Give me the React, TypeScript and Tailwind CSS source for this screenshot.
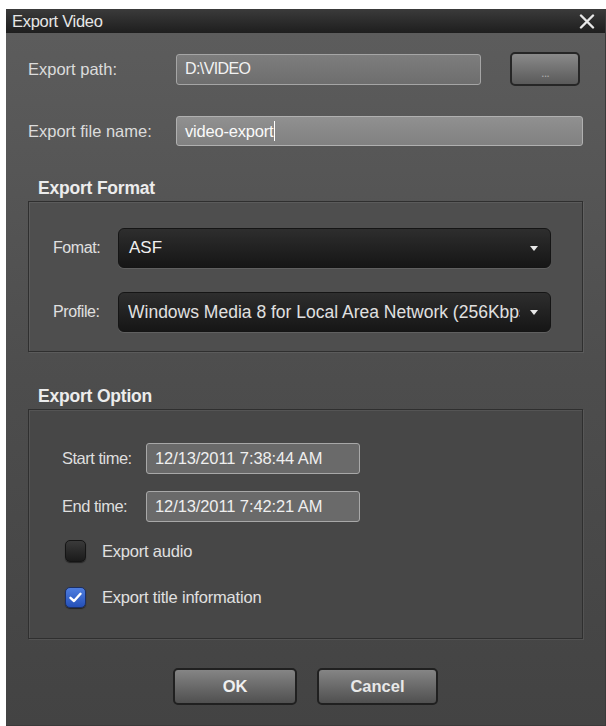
import React from "react";

const font = { fontFamily: '"Liberation Sans", Arial, sans-serif' };

function Caret() {
  return (
    <svg width="8" height="5" viewBox="0 0 8 5" className="shrink-0">
      <path d="M0 0 L8 0 L4 5 Z" fill="#e8e8e8" />
    </svg>
  );
}

function Check({ checked }: { checked: boolean }) {
  if (checked) {
    return (
      <div className="w-[21px] h-[21px] rounded-[5px] border border-[#1b2f66] bg-gradient-to-b from-[#4f7ee0] to-[#2550b8] flex items-center justify-center shadow-[0_1px_1px_rgba(0,0,0,0.5)]">
        <svg width="13" height="11" viewBox="0 0 13 11">
          <path d="M1.5 5.8 L5 9 L11.5 1.8" fill="none" stroke="#ffffff" strokeWidth="2.4" strokeLinecap="round" strokeLinejoin="round" />
        </svg>
      </div>
    );
  }
  return (
    <div className="w-[21px] h-[22px] rounded-[5px] border border-[#151515] bg-gradient-to-b from-[#3a3a3a] to-[#1b1b1b] shadow-[0_1px_1px_rgba(0,0,0,0.5)]" />
  );
}

export default function App() {
  return (
    <div className="w-[606px] h-[726px] bg-white overflow-hidden" style={font}>
      <div className="ml-[6px] mt-[9px] w-[600px] h-[717px] flex flex-col border-r border-b border-[#3a3a3a]">
        {/* title bar */}
        <div className="h-[24px] bg-gradient-to-b from-[#3b3b3b] to-[#1e1e1e] flex items-center justify-between pl-[6px] pr-[10px] shrink-0">
          <span className="text-[16.5px] text-[#e6e6e6] leading-none tracking-[-0.3px]">Export Video</span>
          <svg width="16" height="15" viewBox="0 0 16 15">
            <path d="M2 1.5 L14 13.5 M14 1.5 L2 13.5" stroke="#e8e8e8" strokeWidth="2.4" strokeLinecap="round" />
          </svg>
        </div>
        {/* body */}
        <div className="flex-1 bg-gradient-to-b from-[#5c5c5c] via-[#4d4d4d] to-[#434343] flex flex-col pl-[22px] pt-[19px]">
          {/* row 1 */}
          <div className="flex items-center h-[34px]">
            <span className="w-[148px] text-[16.5px] text-[#dcdcdc] whitespace-nowrap">Export path:</span>
            <div className="w-[305px] h-[31px] rounded-[3px] border border-[#a5a5a5] bg-gradient-to-b from-[#7d7d7d] to-[#6e6e6e] flex items-center pl-[8px] text-[16px] text-[#f2f2f2] tracking-[-0.6px]">
              D:\VIDEO
            </div>
            <div className="ml-[29px] w-[70px] h-[34px] rounded-[5px] border-2 border-[#262626] bg-gradient-to-b from-[#8a8a8a] to-[#5a5a5a] flex items-end justify-center pb-[5px] text-[13px] leading-none text-[#a8a8a8] tracking-[-1px]">
              ...
            </div>
          </div>
          {/* row 2 */}
          <div className="flex items-center h-[30px] mt-[30px]">
            <span className="w-[148px] text-[16.5px] text-[#dcdcdc] whitespace-nowrap">Export file name:</span>
            <div className="w-[407px] h-[30px] rounded-[3px] border border-[#b0b0b0] bg-gradient-to-b from-[#909090] to-[#818181] flex items-center pl-[8px] text-[16.5px] text-[#fafafa] tracking-[-0.2px]">
              video-export<span className="inline-block w-[1px] h-[20px] bg-white ml-[1px]" />
            </div>
          </div>
          {/* Export Format */}
          <div className="mt-[33px] pl-[10px] text-[17.5px] font-bold text-[#ececec] leading-[19px] tracking-[-0.2px]">Export Format</div>
          <div className="mt-[3px] w-[555px] h-[151px] border border-[#2f2f2f] shadow-[inset_1px_1px_0_rgba(255,255,255,0.08),1px_1px_0_rgba(255,255,255,0.08)] bg-[#4e4e4e] flex flex-col pt-[26px] pl-[24px]">
            <div className="flex items-center h-[40px]">
              <span className="w-[65px] text-[16px] text-[#e0e0e0] tracking-[-0.4px]">Fomat:</span>
              <div className="w-[433px] h-[40px] rounded-[6px] border border-[#151515] bg-gradient-to-b from-[#2e2e2e] to-[#161616] flex items-center justify-between pl-[10px] pr-[12px] text-[17px] text-[#f0f0f0] shadow-[0_1px_0_rgba(255,255,255,0.1)]">
                <span>ASF</span>
                <Caret />
              </div>
            </div>
            <div className="flex items-center h-[40px] mt-[24px]">
              <span className="w-[65px] text-[16px] text-[#e0e0e0] tracking-[-0.4px]">Profile:</span>
              <div className="w-[433px] h-[40px] rounded-[6px] border border-[#151515] bg-gradient-to-b from-[#2e2e2e] to-[#161616] flex items-center justify-between pl-[9px] pr-[12px] text-[17.5px] text-[#e0e0e0] shadow-[0_1px_0_rgba(255,255,255,0.1)]">
                <span className="whitespace-nowrap overflow-hidden w-[392px]">Windows Media 8 for Local Area Network (256Kbps)</span>
                <Caret />
              </div>
            </div>
          </div>
          {/* Export Option */}
          <div className="mt-[35px] pl-[10px] text-[17.5px] font-bold text-[#ececec] leading-[19px] tracking-[-0.2px]">Export Option</div>
          <div className="mt-[3px] w-[555px] h-[230px] border border-[#2f2f2f] shadow-[inset_1px_1px_0_rgba(255,255,255,0.07),1px_1px_0_rgba(255,255,255,0.07)] bg-[#474747] flex flex-col pt-[33px] pl-[33px]">
            <div className="flex items-center h-[31px]">
              <span className="w-[84px] text-[16.5px] text-[#dedede] tracking-[-0.5px] whitespace-nowrap">Start time:</span>
              <div className="w-[214px] h-[31px] rounded-[3px] border border-[#a8a8a8] bg-[#6a6a6a] flex items-center pl-[8px] text-[16.5px] text-[#efefef] tracking-[-0.1px] whitespace-nowrap">
                12/13/2011 7:38:44 AM
              </div>
            </div>
            <div className="flex items-center h-[31px] mt-[17px]">
              <span className="w-[84px] text-[16.5px] text-[#dedede] tracking-[-0.5px] whitespace-nowrap">End time:</span>
              <div className="w-[214px] h-[31px] rounded-[3px] border border-[#a8a8a8] bg-[#6a6a6a] flex items-center pl-[8px] text-[16.5px] text-[#efefef] tracking-[-0.1px] whitespace-nowrap">
                12/13/2011 7:42:21 AM
              </div>
            </div>
            <div className="flex items-center h-[22px] mt-[18px] pl-[3px]">
              <Check checked={false} />
              <span className="ml-[16px] text-[16.5px] text-[#e0e0e0] tracking-[-0.2px]">Export audio</span>
            </div>
            <div className="flex items-center h-[22px] mt-[24px] pl-[3px]">
              <Check checked={true} />
              <span className="ml-[16px] text-[16.5px] text-[#e0e0e0] tracking-[-0.2px]">Export title information</span>
            </div>
          </div>
          {/* buttons */}
          <div className="flex justify-center gap-[20px] mt-[29px] pr-[22px]">
            <div className="w-[124px] h-[37px] rounded-[5px] border-2 border-[#202020] bg-gradient-to-b from-[#858585] via-[#6a6a6a] to-[#505050] flex items-center justify-center text-[16.5px] font-bold text-[#f0f0f0]">
              OK
            </div>
            <div className="w-[121px] h-[37px] rounded-[5px] border-2 border-[#202020] bg-gradient-to-b from-[#858585] via-[#6a6a6a] to-[#505050] flex items-center justify-center text-[16.5px] font-bold text-[#e8e8e8]">
              Cancel
            </div>
          </div>
        </div>
      </div>
    </div>
  );
}
